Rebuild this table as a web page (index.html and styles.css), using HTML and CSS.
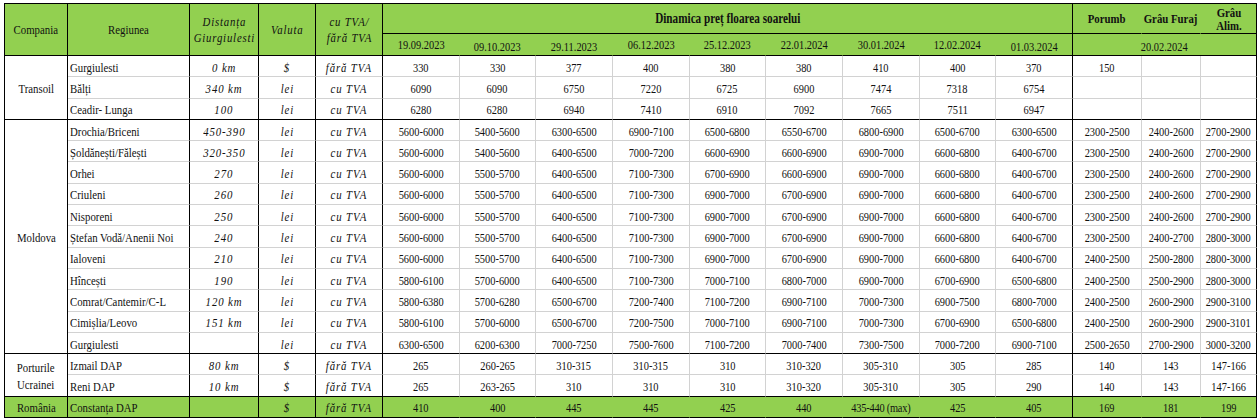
FILE: index.html
```html
<!DOCTYPE html>
<html lang="ro">
<head>
<meta charset="utf-8">
<title>Dinamica preț floarea soarelui</title>
<link rel="stylesheet" href="styles.css">
</head>
<body>
<div class="sheet">
<table class="grid">
<colgroup>
<col class="c-co"><col class="c-reg"><col class="c-dist"><col class="c-cur"><col class="c-vat">
<col class="c-d"><col class="c-d"><col class="c-d"><col class="c-d"><col class="c-d"><col class="c-d"><col class="c-d"><col class="c-d"><col class="c-d">
<col class="c-por"><col class="c-fur"><col class="c-alim">
</colgroup>
<thead>
<tr class="h1">
<th rowspan="2" class="k txt"><span>Compania</span></th>
<th rowspan="2" class="k txt"><span>Regiunea</span></th>
<th rowspan="2" class="k it"><span>Distanța<br>Giurgiulesti</span></th>
<th rowspan="2" class="k it"><span>Valuta</span></th>
<th rowspan="2" class="k it"><span>cu TVA/<br>fără TVA</span></th>
<th colspan="9" class="k dyn"><span>Dinamica preț floarea soarelui</span></th>
<th class="crop"><span>Porumb</span></th>
<th class="crop"><span>Grâu Furaj</span></th>
<th class="k crop tight"><span>Grâu<br>Alim.</span></th>
</tr>
<tr class="h2">
<th><span>19.09.2023</span></th>
<th class="lo"><span>09.10.2023</span></th>
<th class="lo"><span>29.11.2023</span></th>
<th><span>06.12.2023</span></th>
<th><span>25.12.2023</span></th>
<th><span>22.01.2024</span></th>
<th><span>30.01.2024</span></th>
<th><span>12.02.2024</span></th>
<th class="k lo"><span>01.03.2024</span></th>
<th colspan="3" class="k lo"><span>20.02.2024</span></th>
</tr>
</thead>
<tbody>
<tr>
<td rowspan="3" class="co"><span>Transoil</span></td>
<td class="reg"><span>Gurgiulesti</span></td><td class="dist"><span>0 km</span></td><td class="cur"><span>$</span></td><td class="vat"><span>fără TVA</span></td>
<td><span>330</span></td><td><span>330</span></td><td><span>377</span></td><td><span>400</span></td><td><span>380</span></td><td><span>380</span></td><td><span>410</span></td><td><span>400</span></td><td><span>370</span></td>
<td><span>150</span></td><td></td><td></td>
</tr>
<tr>
<td class="reg"><span>Bălți</span></td><td class="dist"><span>340 km</span></td><td class="cur"><span>lei</span></td><td class="vat"><span>cu TVA</span></td>
<td><span>6090</span></td><td><span>6090</span></td><td><span>6750</span></td><td><span>7220</span></td><td><span>6725</span></td><td><span>6900</span></td><td><span>7474</span></td><td><span>7318</span></td><td><span>6754</span></td>
<td></td><td></td><td></td>
</tr>
<tr class="end">
<td class="reg"><span>Ceadir- Lunga</span></td><td class="dist"><span>100</span></td><td class="cur"><span>lei</span></td><td class="vat"><span>cu TVA</span></td>
<td><span>6280</span></td><td><span>6280</span></td><td><span>6940</span></td><td><span>7410</span></td><td><span>6910</span></td><td><span>7092</span></td><td><span>7665</span></td><td><span>7511</span></td><td><span>6947</span></td>
<td></td><td></td><td></td>
</tr>
<tr>
<td rowspan="11" class="co"><span>Moldova</span></td>
<td class="reg"><span>Drochia/Briceni</span></td><td class="dist"><span>450-390</span></td><td class="cur"><span>lei</span></td><td class="vat"><span>cu TVA</span></td>
<td><span>5600-6000</span></td><td><span>5400-5600</span></td><td><span>6300-6500</span></td><td><span>6900-7100</span></td><td><span>6500-6800</span></td><td><span>6550-6700</span></td><td><span>6800-6900</span></td><td><span>6500-6700</span></td><td><span>6300-6500</span></td>
<td><span>2300-2500</span></td><td><span>2400-2600</span></td><td><span>2700-2900</span></td>
</tr>
<tr>
<td class="reg"><span>Șoldănești/Fălești</span></td><td class="dist"><span>320-350</span></td><td class="cur"><span>lei</span></td><td class="vat"><span>cu TVA</span></td>
<td><span>5600-6000</span></td><td><span>5400-5600</span></td><td><span>6400-6500</span></td><td><span>7000-7200</span></td><td><span>6600-6900</span></td><td><span>6600-6900</span></td><td><span>6900-7000</span></td><td><span>6600-6800</span></td><td><span>6400-6700</span></td>
<td><span>2300-2500</span></td><td><span>2400-2600</span></td><td><span>2700-2900</span></td>
</tr>
<tr>
<td class="reg"><span>Orhei</span></td><td class="dist"><span>270</span></td><td class="cur"><span>lei</span></td><td class="vat"><span>cu TVA</span></td>
<td><span>5600-6000</span></td><td><span>5500-5700</span></td><td><span>6400-6500</span></td><td><span>7100-7300</span></td><td><span>6700-6900</span></td><td><span>6600-6900</span></td><td><span>6900-7000</span></td><td><span>6600-6800</span></td><td><span>6400-6700</span></td>
<td><span>2300-2500</span></td><td><span>2400-2600</span></td><td><span>2700-2900</span></td>
</tr>
<tr>
<td class="reg"><span>Criuleni</span></td><td class="dist"><span>260</span></td><td class="cur"><span>lei</span></td><td class="vat"><span>cu TVA</span></td>
<td><span>5600-6000</span></td><td><span>5500-5700</span></td><td><span>6400-6500</span></td><td><span>7100-7300</span></td><td><span>6900-7000</span></td><td><span>6700-6900</span></td><td><span>6900-7000</span></td><td><span>6600-6800</span></td><td><span>6400-6700</span></td>
<td><span>2300-2500</span></td><td><span>2400-2600</span></td><td><span>2700-2900</span></td>
</tr>
<tr>
<td class="reg"><span>Nisporeni</span></td><td class="dist"><span>250</span></td><td class="cur"><span>lei</span></td><td class="vat"><span>cu TVA</span></td>
<td><span>5600-6000</span></td><td><span>5500-5700</span></td><td><span>6400-6500</span></td><td><span>7100-7300</span></td><td><span>6900-7000</span></td><td><span>6700-6900</span></td><td><span>6900-7000</span></td><td><span>6600-6800</span></td><td><span>6400-6700</span></td>
<td><span>2300-2500</span></td><td><span>2400-2600</span></td><td><span>2700-2900</span></td>
</tr>
<tr>
<td class="reg"><span>Ștefan Vodă/Anenii Noi</span></td><td class="dist"><span>240</span></td><td class="cur"><span>lei</span></td><td class="vat"><span>cu TVA</span></td>
<td><span>5600-6000</span></td><td><span>5500-5700</span></td><td><span>6400-6500</span></td><td><span>7100-7300</span></td><td><span>6900-7000</span></td><td><span>6700-6900</span></td><td><span>6900-7000</span></td><td><span>6600-6800</span></td><td><span>6400-6700</span></td>
<td><span>2300-2500</span></td><td><span>2400-2700</span></td><td><span>2800-3000</span></td>
</tr>
<tr>
<td class="reg"><span>Ialoveni</span></td><td class="dist"><span>210</span></td><td class="cur"><span>lei</span></td><td class="vat"><span>cu TVA</span></td>
<td><span>5600-6000</span></td><td><span>5500-5700</span></td><td><span>6400-6500</span></td><td><span>7100-7300</span></td><td><span>6900-7000</span></td><td><span>6700-6900</span></td><td><span>6900-7000</span></td><td><span>6600-6800</span></td><td><span>6400-6700</span></td>
<td><span>2400-2500</span></td><td><span>2500-2800</span></td><td><span>2800-3000</span></td>
</tr>
<tr>
<td class="reg"><span>Hîncești</span></td><td class="dist"><span>190</span></td><td class="cur"><span>lei</span></td><td class="vat"><span>cu TVA</span></td>
<td><span>5800-6100</span></td><td><span>5700-6000</span></td><td><span>6400-6500</span></td><td><span>7100-7300</span></td><td><span>7000-7100</span></td><td><span>6800-7000</span></td><td><span>6900-7000</span></td><td><span>6700-6900</span></td><td><span>6500-6800</span></td>
<td><span>2400-2500</span></td><td><span>2500-2900</span></td><td><span>2800-3000</span></td>
</tr>
<tr>
<td class="reg"><span>Comrat/Cantemir/C-L</span></td><td class="dist"><span>120 km</span></td><td class="cur"><span>lei</span></td><td class="vat"><span>cu TVA</span></td>
<td><span>5800-6380</span></td><td><span>5700-6280</span></td><td><span>6500-6700</span></td><td><span>7200-7400</span></td><td><span>7100-7200</span></td><td><span>6900-7100</span></td><td><span>7000-7300</span></td><td><span>6900-7500</span></td><td><span>6800-7000</span></td>
<td><span>2400-2500</span></td><td><span>2600-2900</span></td><td><span>2900-3100</span></td>
</tr>
<tr>
<td class="reg"><span>Cimișlia/Leovo</span></td><td class="dist"><span>151 km</span></td><td class="cur"><span>lei</span></td><td class="vat"><span>cu TVA</span></td>
<td><span>5800-6100</span></td><td><span>5700-6000</span></td><td><span>6500-6700</span></td><td><span>7200-7500</span></td><td><span>7000-7100</span></td><td><span>6900-7100</span></td><td><span>7000-7300</span></td><td><span>6700-6900</span></td><td><span>6500-6800</span></td>
<td><span>2400-2500</span></td><td><span>2600-2900</span></td><td><span>2900-3101</span></td>
</tr>
<tr class="end">
<td class="reg"><span>Gurgiulesti</span></td><td class="dist"></td><td class="cur"><span>lei</span></td><td class="vat"><span>cu TVA</span></td>
<td><span>6300-6500</span></td><td><span>6200-6300</span></td><td><span>7000-7250</span></td><td><span>7500-7600</span></td><td><span>7100-7200</span></td><td><span>7000-7400</span></td><td><span>7300-7500</span></td><td><span>7000-7200</span></td><td><span>6900-7100</span></td>
<td><span>2500-2650</span></td><td><span>2700-2900</span></td><td><span>3000-3200</span></td>
</tr>
<tr>
<td rowspan="2" class="co"><span>Porturile<br>Ucrainei</span></td>
<td class="reg"><span>Izmail DAP</span></td><td class="dist"><span>80 km</span></td><td class="cur"><span>$</span></td><td class="vat"><span>fără TVA</span></td>
<td><span>265</span></td><td><span>260-265</span></td><td><span>310-315</span></td><td><span>310-315</span></td><td><span>310</span></td><td><span>310-320</span></td><td><span>305-310</span></td><td><span>305</span></td><td><span>285</span></td>
<td><span>140</span></td><td><span>143</span></td><td><span>147-166</span></td>
</tr>
<tr class="end">
<td class="reg"><span>Reni DAP</span></td><td class="dist"><span>10 km</span></td><td class="cur"><span>$</span></td><td class="vat"><span>fără TVA</span></td>
<td><span>265</span></td><td><span>263-265</span></td><td><span>310</span></td><td><span>310</span></td><td><span>310</span></td><td><span>310-320</span></td><td><span>305-310</span></td><td><span>305</span></td><td><span>290</span></td>
<td><span>140</span></td><td><span>143</span></td><td><span>147-166</span></td>
</tr>
<tr class="end ro">
<td class="co"><span>România</span></td>
<td class="reg"><span>Constanța DAP</span></td><td class="dist"></td><td class="cur"><span>$</span></td><td class="vat"><span>fără TVA</span></td>
<td><span>410</span></td><td><span>400</span></td><td><span>445</span></td><td><span>445</span></td><td><span>425</span></td><td><span>440</span></td><td class="wide"><span>435-440 (max)</span></td><td><span>425</span></td><td><span>405</span></td>
<td><span>169</span></td><td><span>181</span></td><td><span>199</span></td>
</tr>
</tbody>
</table>
</div>
</body>
</html>
```

FILE: styles.css
```css
html, body {
  margin: 0;
  padding: 0;
  background: #ffffff;
}

.sheet {
  padding: 3px 0 0 4px;
}

.grid {
  width: 1253px;
  table-layout: fixed;
  border-collapse: separate;
  border-spacing: 0;
  border-top: 1px solid #000;
  border-left: 1px solid #000;
  font-family: "Liberation Serif", "Times New Roman", serif;
  font-size: 13px;
  color: #111;
}

.c-co { width: 63px; }
.c-reg { width: 122px; }
.c-dist { width: 69px; }
.c-cur { width: 57px; }
.c-vat { width: 67px; }
.c-d { width: 76.67px; }
.c-por { width: 69px; }
.c-fur { width: 59px; }
.c-alim { width: 56px; }

.grid th,
.grid td {
  padding: 0;
  border-right: 1px solid #d2d2d2;
  border-bottom: 1px solid #d2d2d2;
  text-align: center;
  vertical-align: middle;
  font-weight: normal;
  white-space: nowrap;
  line-height: 15px;
}

/* the sheet's glyphs are narrow: each label is squeezed horizontally;
   negative side margins keep wide labels centred in their cell */
.grid th > span,
.grid td > span {
  display: inline-block;
  margin: 0 -12px;
  transform: scaleX(0.8);
  transform-origin: 50% 50%;
}

/* header */
.grid thead th {
  background: #92d050;
  border-right-color: #92d050;
  border-bottom-color: #000;
}
.grid thead th.k { border-right-color: #000; }
.h1 { height: 30px; }
.h2 { height: 22px; }
.grid th.txt { font-size: 13.5px; }
.grid th.it {
  font-style: italic;
  font-size: 13.5px;
  letter-spacing: 1px;
  line-height: 16px;
}
.grid th.dyn { font-weight: bold; font-size: 14px; }
.grid th.crop { font-weight: bold; font-size: 13.5px; }
.grid th.tight { line-height: 13px; }
.grid th.lo { padding-top: 4px; }

/* body */
.grid tbody tr { height: 21.3px; }
.grid tbody td { padding-top: 2px; }

.grid td.co {
  font-size: 13.5px;
  border-right-color: #000;
  border-bottom-color: #000;
  line-height: 17px;
}
.grid td.reg {
  text-align: left;
  padding-left: 2px;
  font-size: 13.5px;
  border-right-color: #000;
}
.grid td.reg > span {
  margin: 0 -30px 0 0;
  transform-origin: 0 50%;
}
.grid td.dist,
.grid td.cur,
.grid td.vat {
  font-style: italic;
  font-size: 13.5px;
  letter-spacing: 1.1px;
  border-right-color: #000;
}
.grid td.wide { letter-spacing: -0.3px; }
.grid tbody td:nth-last-child(4),
.grid tbody td:last-child {
  border-right-color: #000;
}
.grid tr.end td { border-bottom-color: #000; }

.grid tr.ro td {
  background: #92d050;
  border-right-color: #92d050;
}
.grid tr.ro td.co,
.grid tr.ro td.reg,
.grid tr.ro td.dist,
.grid tr.ro td.cur,
.grid tr.ro td.vat,
.grid tr.ro td:nth-last-child(4),
.grid tr.ro td:last-child {
  border-right-color: #000;
}
```
